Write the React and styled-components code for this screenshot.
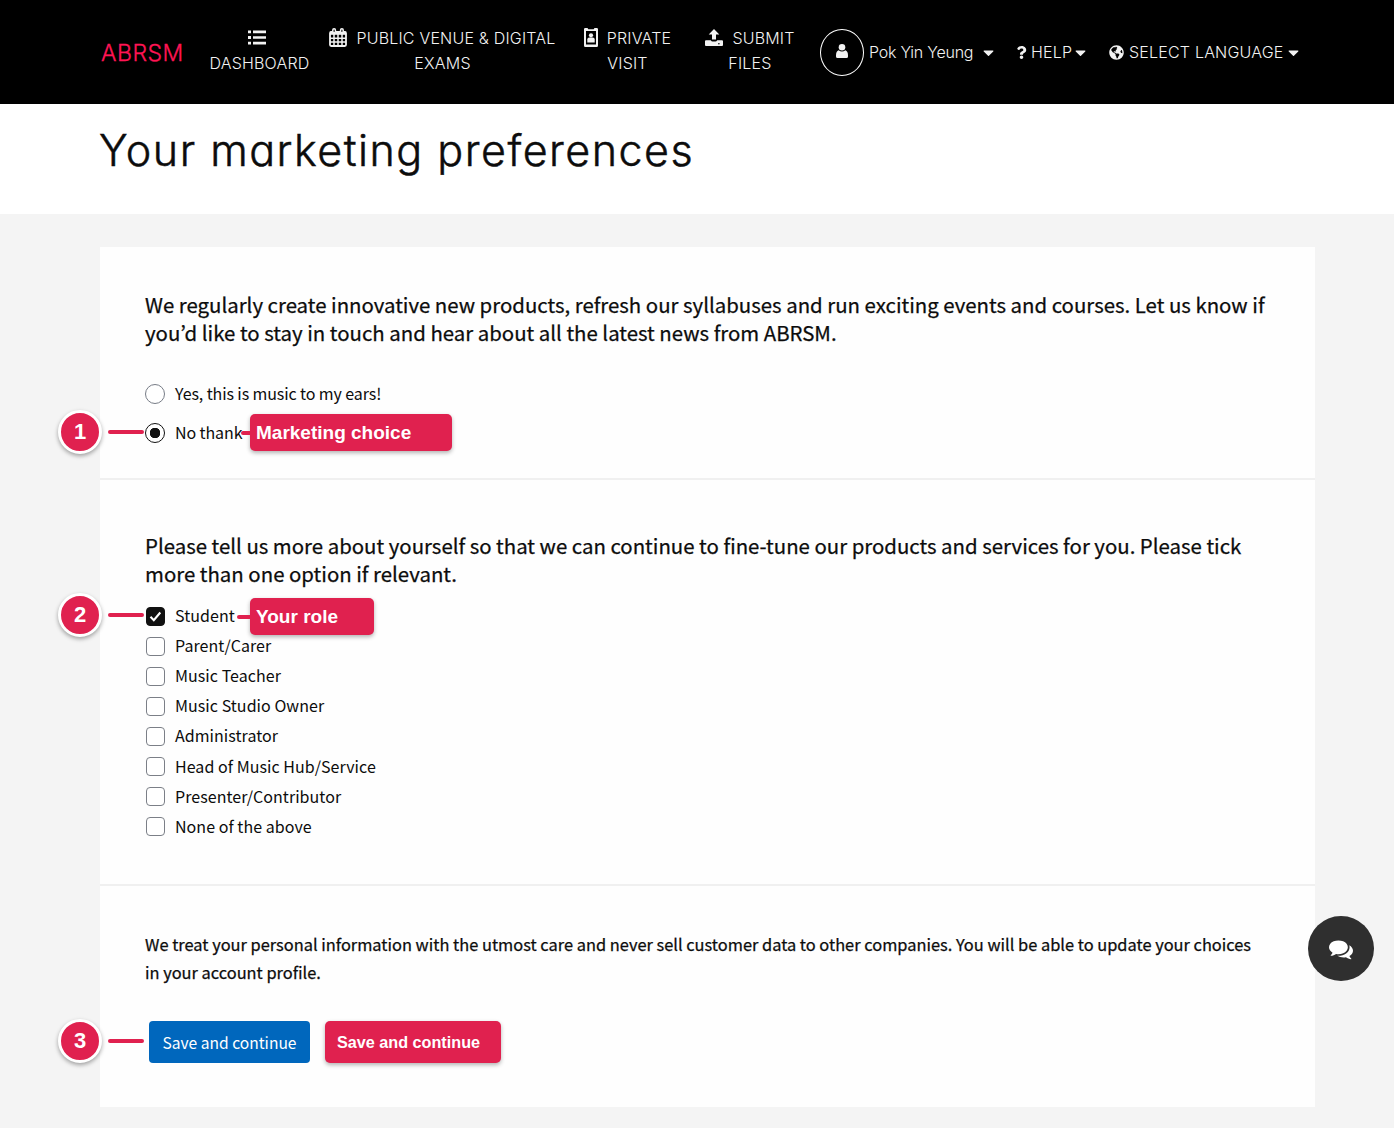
import styled, { createGlobalStyle, css } from "styled-components";
import { FaCaretDown, FaGlobeAmericas, FaQuestion } from "react-icons/fa";

const ROLES = [
  "Student",
  "Parent/Carer",
  "Music Teacher",
  "Music Studio Owner",
  "Administrator",
  "Head of Music Hub/Service",
  "Presenter/Contributor",
  "None of the above",
];

const ListIcon = () => (
  <svg width="18" height="15" viewBox="0 0 18 15" fill="currentColor">
    <path d="M0 .5h3v2.800H0zM0 6.100h3v2.800H0zM0 11.700h3v2.800H0zM5 .6h13v2.600H5zM5 6.200h13v2.600H5zM5 11.800h13v2.600H5z" />
  </svg>
);

const CalendarIcon = () => (
  <svg width="18" height="19" viewBox="0 0 18 19" fill="none" stroke="currentColor">
    <rect x="1" y="4" width="16" height="14" rx="1.2" strokeWidth="1.8" />
    <path d="M1 3.6h16v3.200H1z" fill="currentColor" stroke="none" />
    <path d="M5 6v12M9 6v12M13 6v12M1 10.300h16M1 14h16" strokeWidth="1.5" />
    <rect x="3.8" y="0.8" width="2.6" height="4" rx="1.2" strokeWidth="1.5" fill="#000" />
    <rect x="11.6" y="0.8" width="2.6" height="4" rx="1.2" strokeWidth="1.5" fill="#000" />
  </svg>
);

const BadgeIcon = () => (
  <svg width="14" height="19" viewBox="0 0 14 19" fill="currentColor">
    <path
      fillRule="evenodd"
      d="M1.300 0h2.200l.8 1.200h5.400L10.500 0h2.200Q14 0 14 1.300V17.500Q14 19 12.700 19H1.300Q0 19 0 17.500V1.300Q0 0 1.300 0zM2 3v13.500h10V3z"
    />
    <circle cx="7" cy="7.300" r="2.100" />
    <path d="M3.300 14.500v-3q0-2 2-2h3.400q2 0 2 2v3z" />
  </svg>
);

const UploadIcon = () => (
  <svg width="18" height="17" viewBox="0 0 18 17" fill="currentColor">
    <path d="M9 0l5.300 5.600h-3.300v5H7v-5H3.700z" />
    <path
      fillRule="evenodd"
      d="M1 11.300h4.800q.6 1.200 1.800 1.200h2.800q1.200 0 1.800-1.200H17q1 0 1 1V16q0 1-1 1H1q-1 0-1-1v-3.700q0-1 1-1zM13.900 14a.7.7 0 1 0 .01 0z"
    />
  </svg>
);

const PersonIcon = () => (
  <svg width="12" height="14" viewBox="0 0 12 14" fill="currentColor">
    <circle cx="6" cy="3.300" r="3.300" />
    <path d="M2.600 6.200Q6 8.600 9.400 6.200 12 7 12 11.500V12.500Q12 14 10.500 14h-9Q0 14 0 12.500v-1Q0 7 2.600 6.200z" />
  </svg>
);

const ChatIcon = () => (
  <svg width="24" height="24" viewBox="0 0 1792 1792" fill="currentColor">
    <path d="M1408 768q0 139-94 257t-256.500 186.500-353.500 68.500q-86 0-176-16-124 88-278 128-36 9-86 16h-3q-11 0-20.500-8t-11.500-21q-1-3-1-6.500t.5-6.500 2-6l2.500-5 3.500-5.500 4-5 4.500-5 4-4.500q5-6 23-25t26-29.500 22.500-29 25-38.500 20.500-44q-124-72-195-177t-71-224q0-139 94-257t256.500-186.500 353.500-68.500 353.500 68.500 256.500 186.500 94 257zm384 256q0 120-71 224.500t-195 176.500q10 24 20.500 44t25 38.500 22.500 29 26 29.500 23 25q1 1 4 4.500t4.500 5 4 5 3.500 5.500l2.500 5 2 6 .5 6.500-1 6.500q-3 14-13 22t-22 7q-50-7-86-16-154-40-278-128-90 16-176 16-271 0-472-132 58 4 88 4 161 0 309-45t264-129q125-92 192-212t67-254q0-77-23-152 129 71 204 178t75 230z" />
  </svg>
);

const Tick = () => (
  <svg width="13" height="11" viewBox="0 0 13 11" fill="none">
    <path d="M1.500 5.800l3.300 3.400L11.300 1.500" stroke="#fff" strokeWidth="2.100" />
  </svg>
);

const App = () => {
  return (
    <>
      <GlobalStyle />
      <Header>
        <Logo>ABRSM</Logo>
        <NavItem $width={101} $gap={21}>
          <IconLine $nudge={6}>
            <ListIcon />
          </IconLine>
          <span>DASHBOARD</span>
        </NavItem>
        <NavItem $width={225} $gap={20}>
          <IconLine>
            <CalendarIcon />
            PUBLIC VENUE &amp; DIGITAL
          </IconLine>
          <span>EXAMS</span>
        </NavItem>
        <NavItem $width={87} $gap={29}>
          <IconLine>
            <BadgeIcon />
            PRIVATE
          </IconLine>
          <span>VISIT</span>
        </NavItem>
        <NavItem $width={86} $gap={36}>
          <IconLine>
            <UploadIcon />
            SUBMIT
          </IconLine>
          <span>FILES</span>
        </NavItem>
        <Account>
          <Avatar>
            <PersonIcon />
          </Avatar>
          <MenuText $width={104}>Pok Yin Yeung</MenuText>
          <Caret $gap={10} />
        </Account>
        <Menu $gap={21} $space={3}>
          <FaQuestion size={13} />
          <MenuText $width={41}>HELP</MenuText>
          <Caret $gap={0} />
        </Menu>
        <Menu $gap={23} $space={5}>
          <FaGlobeAmericas size={15} />
          <MenuText $width={154}>SELECT LANGUAGE</MenuText>
          <Caret $gap={0} />
        </Menu>
      </Header>

      <TitleBar>
        <Title>Your marketing preferences</Title>
      </TitleBar>

      <Card>
        <Section $height={231} $top={43}>
          <Question>
            We regularly create innovative new products, refresh our syllabuses
            and run exciting events and courses. Let us know if
            <br />
            you’d like to stay in touch and hear about all the latest news from
            ABRSM.
          </Question>
          <Choices>
            <Choice $height={39}>
              <Radio />
              <ChoiceText $tight>Yes, this is music to my ears!</ChoiceText>
            </Choice>
            <Choice $height={40}>
              <Radio $checked />
              <ChoiceText $tight>No thank</ChoiceText>
              <Step>1</Step>
              <Label $top={1} $width={202} $lead={9}>
                Marketing choice
              </Label>
            </Choice>
          </Choices>
        </Section>

        <Section $height={406} $top={51}>
          <Question>
            Please tell us more about yourself so that we can continue to
            fine-tune our products and services for you. Please tick
            <br />
            more than one option if relevant.
          </Question>
          <Roles>
            {ROLES.map((role, i) => (
              <Choice key={role} $height={30.1}>
                <Checkbox $checked={i === 0}>{i === 0 && <Tick />}</Checkbox>
                <ChoiceText>{role}</ChoiceText>
                {i === 0 && (
                  <>
                    <Step>2</Step>
                    <Label $top={-3} $width={124} $lead={13}>
                      Your role
                    </Label>
                  </>
                )}
              </Choice>
            ))}
          </Roles>
        </Section>

        <Section $height={223} $top={45}>
          <Note>
            We treat your personal information with the utmost care and never
            sell customer data to other companies. You will be able to update
            your choices
            <br />
            in your account profile.
          </Note>
          <Actions>
            <SaveButton>Save and continue</SaveButton>
            <SaveLabel>Save and continue</SaveLabel>
            <Step>3</Step>
          </Actions>
        </Section>
      </Card>

      <ChatButton>
        <ChatIcon />
      </ChatButton>
    </>
  );
};

export default App;

const GlobalStyle = createGlobalStyle`
  * {
    box-sizing: border-box;
  }
  body {
    margin: 0;
    height: 1128px;
    overflow: hidden;
    background: #f4f4f4;
    color: #0c0c0c;
    font-family: "Noto Sans CJK JP", "Open Sans", sans-serif;
  }
  svg {
    flex: none;
    display: block;
  }
`;

const Header = styled.header`
  display: flex;
  align-items: center;
  height: 104px;
  padding-left: 101px;
  background: #000;
  color: #f2f2f2;
  font-family: Inter, sans-serif;
  font-size: 16px;
  font-weight: 300;
  letter-spacing: 0.2px;
  white-space: nowrap;
`;

const Logo = styled.div`
  width: 87px;
  padding-top: 2px;
  color: #ff1454;
  font-size: 23px;
  letter-spacing: 0.5px;
  line-height: 30px;
  -webkit-text-stroke: 0.3px;
`;

const NavItem = styled.div`
  display: flex;
  flex: none;
  flex-direction: column;
  align-items: center;
  width: ${(p) => p.$width}px;
  margin-left: ${(p) => p.$gap}px;
  padding-bottom: 2px;
  line-height: 25px;
`;

const IconLine = styled.div`
  display: flex;
  align-items: center;
  justify-content: center;
  gap: 9px;
  height: 25px;
  padding-right: ${(p) => p.$nudge || 0}px;
  svg {
    margin-bottom: 2px;
  }
`;

const Account = styled.div`
  display: flex;
  align-items: center;
  margin-left: 27px;
  letter-spacing: -0.25px;
`;

const Avatar = styled.div`
  display: flex;
  align-items: center;
  justify-content: center;
  width: 44px;
  height: 47px;
  margin-right: 5px;
  padding-bottom: 3px;
  border: 1.5px solid #fff;
  border-radius: 50%;
`;

const Menu = styled.div`
  display: flex;
  align-items: center;
  gap: ${(p) => p.$space}px;
  margin-left: ${(p) => p.$gap}px;
`;

const MenuText = styled.span`
  width: ${(p) => p.$width}px;
`;

const Caret = styled(FaCaretDown)`
  width: 11px;
  height: 17px;
  margin-left: ${(p) => p.$gap}px;
`;

const TitleBar = styled.div`
  height: 110px;
  padding: 20px 0 0 99px;
  background: #fff;
`;

const Title = styled.h1`
  margin: 0;
  font-family: Inter, sans-serif;
  font-feature-settings: "cv11";
  font-size: 43px;
  font-weight: 300;
  letter-spacing: 1.5px;
  line-height: 53px;
  white-space: nowrap;
  -webkit-text-stroke: 0.5px;
`;

const Card = styled.main`
  width: 1215px;
  height: 860px;
  margin: 33px 0 0 100px;
  background: #fefefe;
`;

const Section = styled.section`
  height: ${(p) => p.$height}px;
  padding: ${(p) => p.$top}px 0 0 45px;
  & + & {
    border-top: 2px solid #f0f0f0;
  }
`;

const Question = styled.p`
  margin: 0;
  font-size: 20.4px;
  line-height: 28px;
  white-space: nowrap;
  -webkit-text-stroke: 0.25px;
`;

const Choices = styled.div`
  padding-top: 28px;
`;

const Roles = styled.div`
  padding-top: 14px;
`;

const Choice = styled.div`
  position: relative;
  display: flex;
  align-items: center;
  gap: 10px;
  height: ${(p) => p.$height}px;
  font-size: 16px;
  white-space: nowrap;
`;

const ChoiceText = styled.span`
  padding-bottom: 2px;
  letter-spacing: ${(p) => (p.$tight ? "-0.1px" : "0.05px")};
`;

const Radio = styled.span`
  width: 20px;
  height: 20px;
  border: 1.5px solid ${(p) => (p.$checked ? "#111" : "#777c86")};
  border-radius: 50%;
  background: ${(p) =>
    p.$checked ? "radial-gradient(circle, #111 5px, #fff 5.5px)" : "#fff"};
`;

const Checkbox = styled.span`
  display: flex;
  align-items: center;
  justify-content: center;
  width: 19px;
  height: 19px;
  margin-left: 1px;
  border: 1.5px solid #7b7f87;
  border-radius: 4px;
  background: #fff;
  ${(p) =>
    p.$checked &&
    css`
      border-color: #111;
      background: #111;
    `}
`;

/* numbered marker hanging off the left side of its row */
const Step = styled.span`
  position: absolute;
  top: 50%;
  left: -87px;
  display: flex;
  align-items: center;
  justify-content: center;
  width: 44px;
  height: 44px;
  margin-top: -23px;
  border: 3px solid #fff;
  border-radius: 50%;
  background: #e0214f;
  box-shadow: 0 2px 4px rgba(0, 0, 0, 0.35);
  color: #fff;
  font: bold 22px "Liberation Sans", sans-serif;
  &::after {
    content: "";
    position: absolute;
    top: 17px;
    left: 47px;
    width: 36px;
    height: 4px;
    border-radius: 2px;
    background: #e0214f;
  }
`;

const tag = css`
  display: flex;
  align-items: center;
  border-radius: 5px;
  background: #e0214f;
  box-shadow: 0 2px 4px rgba(0, 0, 0, 0.3);
  color: #fff;
  font-family: "Liberation Sans", sans-serif;
  font-weight: bold;
`;

const Label = styled.span`
  ${tag}
  position: absolute;
  top: ${(p) => p.$top}px;
  left: 105px;
  width: ${(p) => p.$width}px;
  height: 37px;
  padding-left: 6px;
  font-size: 19px;
  &::before {
    content: "";
    position: absolute;
    top: 17px;
    right: 100%;
    width: ${(p) => p.$lead}px;
    height: 3.5px;
    border-radius: 2px 0 0 2px;
    background: #e0214f;
  }
`;

const Note = styled.p`
  margin: 0;
  font-size: 16.4px;
  line-height: 27.5px;
  white-space: nowrap;
  -webkit-text-stroke: 0.25px;
`;

const Actions = styled.div`
  position: relative;
  display: flex;
  gap: 15px;
  margin-top: 35px;
  padding-left: 4px;
`;

const SaveButton = styled.button`
  width: 161px;
  height: 42px;
  padding: 0;
  border: 0;
  border-radius: 4px;
  background: #0067bd;
  color: #fff;
  font-family: inherit;
  font-size: 15.6px;
`;

const SaveLabel = styled.span`
  ${tag}
  width: 176px;
  height: 42px;
  padding-left: 12px;
  font-size: 16.2px;
`;

const ChatButton = styled.div`
  position: fixed;
  top: 916px;
  left: 1308px;
  display: flex;
  align-items: center;
  justify-content: center;
  width: 66px;
  height: 65px;
  border-radius: 50%;
  background: #2f2f2f;
  color: #fff;
`;
